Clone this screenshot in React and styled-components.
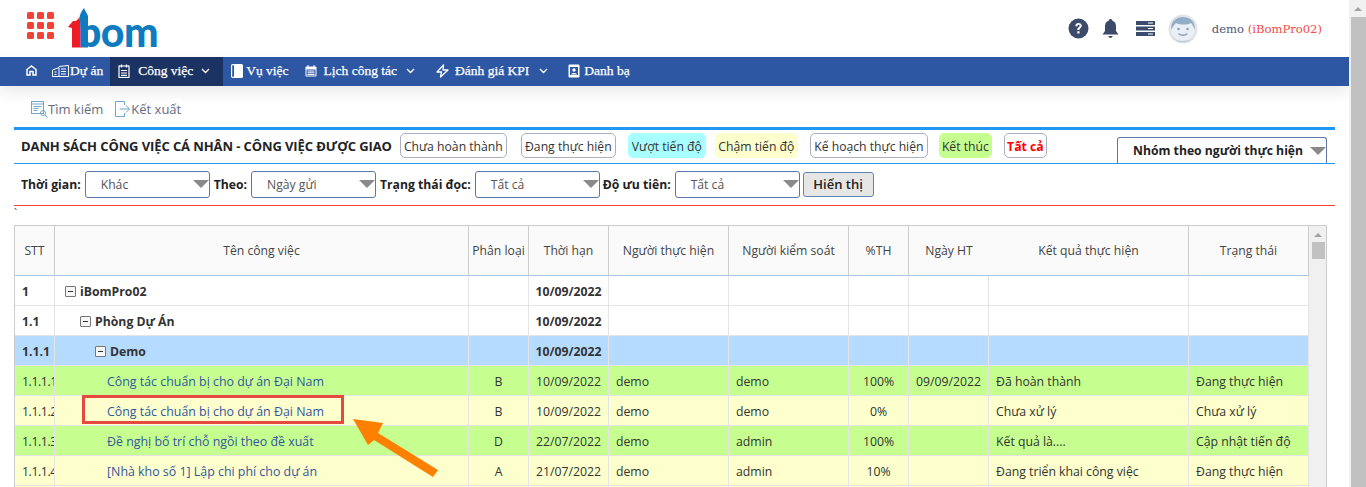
import React from "react";
import styled, { createGlobalStyle } from "styled-components";

const Global = createGlobalStyle`
  html, body { margin: 0; padding: 0; height: 487px; overflow: hidden; background: #fff; }
  * { box-sizing: border-box; }
  body { font-family: "Open Sans", "Noto Sans", sans-serif; font-size: 12px; color: #333; }
`;

const Page = styled.div`display: flex; width: 1366px; height: 487px; overflow: hidden;`;
const Main = styled.div`width: 1349px; height: 487px; overflow: hidden; flex: none;`;
const PageScroll = styled.div`
  width: 17px; height: 487px; flex: none; background: #f1f1f1; display: flex; flex-direction: column; align-items: flex-end;
`;
const ArrowCell = styled.div`
  width: 17px; height: 17px; display: flex; align-items: center; justify-content: center; flex: none;
`;
const UpTri = styled.div`
  width: 0; height: 0; border-left: 4px solid transparent; border-right: 4px solid transparent; border-bottom: 4px solid #a3a3a3;
`;
const PageThumb = styled.div`width: 15px; flex: 1; background: #c1c1c1;`;

const Header = styled.header`display: flex; align-items: center; justify-content: space-between; height: 57px; padding: 0 27px;`;
const Brand = styled.div`display: flex; align-items: flex-start; gap: 13px; height: 57px; padding-top: 8px;`;
const Actions = styled.div`display: flex; align-items: center; height: 57px;`;
const IconSlot = styled.span`display: flex; align-items: center; justify-content: center; margin-right: ${p => p.$mr}px;`;
const UserName = styled.span`font-family: "Roboto Slab", "DejaVu Serif", "Liberation Serif", serif; font-size: 11.6px; color: #4a5878; margin-left: 14px;`;
const Org = styled.span`color: #f44a45;`;

const Nav = styled.nav`
  height: 29px; background: #2d57a3; display: flex; align-items: stretch; padding-left: 26px;
  box-shadow: 0 6px 16px rgba(0,0,0,.09);
  font-family: "Liberation Serif", serif; color: #fff; font-size: 13.5px;
`;
const NavItem = styled.div`
  display: flex; align-items: center; white-space: nowrap; padding-bottom: 2px;
  margin-left: ${p => p.$ml || 0}px;
  width: ${p => p.$w ? p.$w + "px" : "auto"};
  padding-left: ${p => p.$pl || 0}px;
  background: ${p => p.$active ? "#1b3362" : "transparent"};
  -webkit-text-stroke: .25px #fff;
`;
const NavLabel = styled.span`margin-left: ${p => p.$ml}px;`;
const Chev = styled.span`display: flex; margin-left: ${p => p.$ml}px;`;

const Tools = styled.div`height: 41px; display: flex; align-items: center; padding: 5px 0 0 31px; color: #646c82; font-size: 13px; gap: 12px;`;
const Tool = styled.span`display: flex; align-items: center; gap: ${p => p.$g}px;`;

const Content = styled.div`position: relative; margin-left: 14px; width: 1321px;`;
const TitleRow = styled.div`
  height: 37px; border-top: 3px solid #2196f3; border-bottom: 1px solid #2196f3;
  display: flex; align-items: center; padding: 0 0 2px 7px; position: relative;
`;
const Title = styled.div`font-weight: 700; font-size: 13px; color: #222; white-space: nowrap; margin-right: 8px; letter-spacing: -.1px;`;
const Chip = styled.div`
  width: ${p => p.$w}px; height: 25px; margin-right: ${p => p.$mr}px; padding-top: 2px; border-radius: 5px; display: flex; align-items: center; justify-content: center; white-space: nowrap; flex: none;
  font-size: 12.2px; color: ${p => p.$red ? "#f00" : "#333"}; font-weight: ${p => p.$red ? 700 : 400};
  background: ${p => p.$bg || "#fff"}; border: 1px solid ${p => p.$bg ? p.$bg : "#aab0bf"};
`;
const GroupSelect = styled.div`
  position: absolute; right: 8px; top: 7px; width: 210px; height: 26px; border: 1px solid #5b77ab; border-bottom: 0; border-radius: 3px 3px 0 0;
  background: #fff; display: flex; align-items: center; padding-left: 15px; font-weight: 700; font-size: 12.2px; color: #222; white-space: nowrap;
`;
const Tri = styled.span`
  position: absolute; right: 0; top: 50%; margin-top: -4px; width: 0; height: 0;
  border-left: 8px solid transparent; border-right: 8px solid transparent; border-top: 8px solid #8a8a8a;
`;
const FilterRow = styled.div`
  height: 42px; border-bottom: 1px solid #f44336; display: flex; align-items: center; padding: 0 0 1px 7px;
`;
const FLabel = styled.label`font-weight: 700; font-size: 12.2px; color: #222; white-space: nowrap; margin-right: 4px;`;
const FSelect = styled.div`
  position: relative; width: 125px; height: 27px; border: 1px solid #5b77ab; border-radius: 3px; display: flex; align-items: center; padding-left: 15px;
  font-size: 12.2px; color: #555; margin-right: ${p => p.$mr ?? 4}px; flex: none;
`;
const ShowBtn = styled.button`
  width: 71px; height: 25px; background: #e6e6e6; border: 1px solid #5b86b3; border-radius: 3px; font: 600 13px "Open Sans", sans-serif; color: #222; padding: 0; flex: none;
`;
const Tick = styled.div`height: 19px; font-size: 11px; color: #444; padding-top: 2px; line-height: 10px;`;

const TableBox = styled.div`
  width: 1313px; height: 400px; border: 1px solid #ccc; border-bottom: 0; display: flex; overflow: hidden;
`;
const TableArea = styled.div`width: 1294px; flex: none; border-right: 1px solid #ccc;`;
const Table = styled.table`
  width: 1294px; table-layout: fixed; border-collapse: separate; border-spacing: 0;
`;
const Th = styled.th`
  height: 50px; background: #fafafa; font-weight: 400; color: #444; font-size: 12.2px; text-align: center; padding: 0;
  border-right: ${p => p.$nb ? "0" : "1px solid #ccc"}; border-bottom: 1px solid #a9c6de; white-space: nowrap; overflow: hidden;
`;
const Row = styled.tr`background: ${p => p.$bg};`;
const Td = styled.td`
  height: 30px; padding: 2px 0 0 ${p => p.$pl ?? 7}px; border-right: 1px solid #e4e4e4; border-bottom: 1px solid #e4e4e4;
  white-space: nowrap; overflow: hidden; color: ${p => p.$link ? "#34569f" : "#333"}; font-weight: ${p => p.$b ? 700 : 400};
  text-align: ${p => p.$c ? "center" : "left"}; font-size: ${p => p.$link ? 12.4 : 12.25}px;
  letter-spacing: ${p => p.$tight ? "-.4px" : "normal"};
`;
const Tree = styled.div`display: flex; align-items: center; gap: 4px;`;
const Toggle = styled.span`
  display: flex; width: 11px; height: 11px; border: 1px solid #777; border-radius: 1px; align-items: center; justify-content: center; background: #f6f6f6; flex: none;
  &::before { content: ""; width: 5px; height: 1px; background: #333; }
`;
const TScroll = styled.div`width: 18px; flex: none; background: #f0f0f0; display: flex; flex-direction: column; align-items: center;`;
const TTri = styled.div`margin-top: 7px; width: 0; height: 0; border-left: 4px solid transparent; border-right: 4px solid transparent; border-bottom: 4px solid #a3a3a3;`;
const TThumb = styled.div`margin-top: 5px; width: 13px; height: 17px; background: #c1c1c1;`;

const Callout = styled.div`position: absolute; left: 68px; top: 268px; width: 262px; height: 29px; border: 3px solid #e5493f; pointer-events: none;`;
const Arrow = styled.svg`position: absolute; left: 326px; top: 283px; pointer-events: none;`;

const Grid9 = () => (
  <svg width="27" height="27" viewBox="0 0 27 27" style={{ marginTop: 4 }}>
    {[0, 10, 20].flatMap(y => [0, 10, 20].map(x => <rect key={x + "-" + y} x={x} y={y} width="7" height="7" rx="1.5" fill="#f44336" />))}
  </svg>
);
const LogoWrap = styled.div`display: flex; align-items: flex-end; height: 40px;`;
const Sail = () => (
  <svg width="22" height="40" viewBox="0 0 22 40">
    <path d="M1 19 L6 13 L9 13 C11 11 12 10 12.5 9 C14 18 14 30 16 39.5 L5 39.5 L5 20 Z" fill="#ee1c25" />
    <path d="M17 0 C14 4 12.5 7 12.5 10 C14 18 14 30 16 39.5 L21 39.5 L21 8 C20 5 18 3 17 0 Z" fill="#0f7cc0" />
  </svg>
);
const LogoText = styled.span`
  font: 900 41px/32px "Lato", "Open Sans", sans-serif; color: #0f7cc0; letter-spacing: -.6px; margin-left: -11px; height: 32px; display: block;
`;

const Help = () => (
  <svg width="21" height="21" viewBox="0 0 21 21"><circle cx="10.5" cy="10.5" r="10" fill="#3c4a6b" />
    <path d="M7.3 8.2c0-2 1.4-3.2 3.3-3.2s3.2 1.1 3.2 2.8c0 2.3-2.4 2.3-2.4 4.2H9.3c0-2.8 2.4-2.8 2.4-4.2 0-.7-.5-1.1-1.1-1.1-.8 0-1.2.5-1.2 1.5z" fill="#fff" /><rect x="9.3" y="13.2" width="2.2" height="2.3" fill="#fff" /></svg>
);
const Bell = () => (
  <svg width="17" height="21" viewBox="0 0 17 21"><path d="M8.5 1c1 0 1.6.6 1.6 1.4C13 3.2 14 5.6 14 8.5V13l2.5 3.5H.5L3 13V8.5c0-2.9 1-5.3 3.9-6.1C6.9 1.6 7.5 1 8.5 1z" fill="#3c4a6b" /><path d="M6.3 18h4.4c-.4 1.3-1.2 2-2.2 2s-1.8-.7-2.2-2z" fill="#3c4a6b" /></svg>
);
const Server = () => (
  <svg width="19" height="15" viewBox="0 0 19 15">
    {[0, 5.5, 11].map(y => <g key={y}><rect y={y} width="19" height="4" fill="#3c4a6b" /><rect x="12" y={y + 1.5} width="5" height="1" fill="#fff" /></g>)}
  </svg>
);
const Avatar = () => (
  <svg width="30" height="30" viewBox="0 0 30 30">
    <circle cx="15" cy="15" r="14.5" fill="#dfe4e8" />
    <circle cx="15" cy="15" r="12" fill="#e9eff4" />
    <path d="M3.5 16C2 8 8 3 15 3s13 5 11.5 13c-1-3-2-5.5-3.5-7-3 2-11 2-15 0-1.5 1.5-3.5 4-4.5 7z" fill="#94adc6" />
    <circle cx="10.5" cy="15" r="1.3" fill="#8ba3ba" /><circle cx="19.5" cy="15" r="1.3" fill="#8ba3ba" />
    <path d="M10.5 19.5c2.5 2.3 6.5 2.3 9 0" stroke="#8ba3ba" strokeWidth="1.3" fill="none" />
    <path d="M4 23a14 14 0 0 0 22 0c-3 3-7 4-11 4s-8-1-11-4z" fill="#bcc7d0" />
  </svg>
);

const s = { fill: "none", stroke: "#fff", strokeWidth: 1.2 };
const Home = () => (<svg width="11" height="11" viewBox="0 0 11 11" {...s} strokeWidth="1.5"><path d="M1 4.5l4.5-3.5L10 4.5V10H7V6.5H4V10H1z" /></svg>);
const Bldg = () => (<svg width="17" height="12" viewBox="0 0 17 12" {...s} strokeWidth="1"><path d="M.5 11.5V5L7 2.5v9M7 1.5L16.5.5v11H.5" /><path d="M9 4h5M9 6.5h5M9 9h5M2.5 7h2M2.5 9.5h2" /></svg>);
const Clip = () => (<svg width="12" height="14" viewBox="0 0 12 14" {...s}><rect x="1" y="2" width="10" height="11.5" /><path d="M3.5 .5v3M8.5 .5v3M3 6.5h6M3 9h6M3 11.3h6" /></svg>);
const Book = () => (<svg width="12" height="14" viewBox="0 0 12 14"><rect x=".6" y=".6" width="10.8" height="12.8" rx="1" fill="none" stroke="#fff" strokeWidth="1.2" /><rect x="3" y="1" width="8" height="12" fill="#fff" /></svg>);
const Cal = () => (<svg width="12" height="12" viewBox="0 0 12 12"><rect x=".5" y="1.5" width="11" height="10" rx="1" fill="#fff" /><rect x="1.5" y="4.5" width="9" height="6" fill="#2d57a3" /><path d="M2.5 6h7M2.5 7.8h7M2.5 9.5h7" stroke="#fff" /><path d="M3 0v2M9 0v2" stroke="#fff" /></svg>);
const Bolt = () => (<svg width="13" height="14" viewBox="0 0 13 14" fill="none" stroke="#fff" strokeWidth="1.3" strokeLinejoin="round"><path d="M7.5 1L1 8h4.5l-1 5L12 6H7z" /></svg>);
const Contact = () => (<svg width="12" height="14" viewBox="0 0 12 14"><rect x=".5" y=".5" width="11" height="13" rx="1" fill="#fff" /><rect x="2" y="3" width="8" height="8" fill="#2d57a3" /><circle cx="6" cy="6" r="1.7" fill="#fff" /><path d="M3 10.5c.5-2 5.5-2 6 0z" fill="#fff" /></svg>);
const ChevD = () => (<svg width="9" height="6" viewBox="0 0 9 6" fill="none" stroke="#fff" strokeWidth="1.3"><path d="M1 1l3.5 3.5L8 1" /></svg>);
const SearchDoc = () => (
  <svg width="17" height="17" viewBox="0 0 17 17" fill="none" stroke="#6fa5cf">
    <rect x=".5" y=".5" width="12" height="12" /><path d="M.5 3h12M2.5 5.500h8M2.5 7.5h5M2.5 9.5h4" /><circle cx="12" cy="12" r="2.5" /><path d="M14 14l2.5 2.5" />
  </svg>
);
const Export = () => (
  <svg width="15" height="16" viewBox="0 0 15 16" fill="none" stroke="#6fa5cf"><path d="M9.5 4V.5H.5v15h9V12M4.5 8h10M11 4.5L14.5 8 11 11.5" /></svg>
);

const cols = [40, 414, 60, 80, 120, 120, 60, 80, 200, 120];
const heads = [
  ["STT"], ["Tên công việc"], ["Phân loại"], ["Thời hạn"], ["Người thực hiện"], ["Người kiểm soát"],
  ["%TH"], ["Ngày HT", true], ["Kết quả thực hiện"], ["Trạng thái"],
];
const GREEN = "#c6ff8f", YEL = "#fdffcc", BLUE = "#b5dcff";
const rows = [
  { bg: "#fff", stt: "1", name: "iBomPro02", lvl: 0, date: "10/09/2022" },
  { bg: "#fff", stt: "1.1", name: "Phòng Dự Án", lvl: 1, date: "10/09/2022" },
  { bg: BLUE, stt: "1.1.1", name: "Demo", lvl: 2, date: "10/09/2022" },
  { bg: GREEN, stt: "1.1.1.1", name: "Công tác chuẩn bị cho dự án Đại Nam", t: "B", date: "10/09/2022", a: "demo", b: "demo", p: "100%", d: "09/09/2022", r: "Đã hoàn thành", st: "Đang thực hiện" },
  { bg: YEL, stt: "1.1.1.2", name: "Công tác chuẩn bị cho dự án Đại Nam", t: "B", date: "10/09/2022", a: "demo", b: "demo", p: "0%", d: "", r: "Chưa xử lý", st: "Chưa xử lý" },
  { bg: GREEN, stt: "1.1.1.3", name: "Đề nghị bố trí chỗ ngồi theo đề xuất", t: "D", date: "22/07/2022", a: "demo", b: "admin", p: "100%", d: "", r: "Kết quả là....", st: "Cập nhật tiến độ" },
  { bg: YEL, stt: "1.1.1.4", name: "[Nhà kho số 1] Lập chi phí cho dự án", t: "A", date: "21/07/2022", a: "demo", b: "admin", p: "10%", d: "", r: "Đang triển khai công việc", st: "Đang thực hiện" },
  { bg: YEL, stt: "1.1.1.5", name: "", t: "", date: "", a: "", b: "", p: "", d: "", r: "", st: "" },
];

export default function App() {
  return (
    <Page>
      <Global />
      <Main>
        <Header>
          <Brand>
            <Grid9 />
            <LogoWrap>
              <Sail />
              <LogoText>bom</LogoText>
            </LogoWrap>
          </Brand>
          <Actions>
            <IconSlot $mr={13}><Help /></IconSlot>
            <IconSlot $mr={17}><Bell /></IconSlot>
            <IconSlot $mr={13}><Server /></IconSlot>
            <Avatar />
            <UserName>demo <Org>(iBomPro02)</Org></UserName>
          </Actions>
        </Header>
        <Nav>
          <NavItem><Home /></NavItem>
          <NavItem $ml={15}><Bldg /><NavLabel $ml={1}>Dự án</NavLabel></NavItem>
          <NavItem $ml={7} $w={113} $pl={8} $active><Clip /><NavLabel $ml={8}>Công việc</NavLabel><Chev $ml={8}><ChevD /></Chev></NavItem>
          <NavItem $ml={8}><Book /><NavLabel $ml={3}>Vụ việc</NavLabel></NavItem>
          <NavItem $ml={16}><Cal /><NavLabel $ml={7}>Lịch công tác</NavLabel><Chev $ml={9}><ChevD /></Chev></NavItem>
          <NavItem $ml={21}><Bolt /><NavLabel $ml={6}>Đánh giá KPI</NavLabel><Chev $ml={10}><ChevD /></Chev></NavItem>
          <NavItem $ml={20}><Contact /><NavLabel $ml={4}>Danh bạ</NavLabel></NavItem>
        </Nav>
        <Tools>
          <Tool $g={0}><SearchDoc />Tìm kiếm</Tool>
          <Tool $g={1}><Export />Kết xuất</Tool>
        </Tools>
        <Content>
          <TitleRow>
            <Title>DANH SÁCH CÔNG VIỆC CÁ NHÂN - CÔNG VIỆC ĐƯỢC GIAO</Title>
            <Chip $w={107} $mr={14}>Chưa hoàn thành</Chip>
            <Chip $w={95} $mr={12}>Đang thực hiện</Chip>
            <Chip $w={78} $mr={9} $bg="#a8ffff">Vượt tiến độ</Chip>
            <Chip $w={83} $mr={12} $bg="#fdffcc">Chậm tiến độ</Chip>
            <Chip $w={118} $mr={11}>Kế hoạch thực hiện</Chip>
            <Chip $w={53} $mr={12} $bg="#c6ff8f">Kết thúc</Chip>
            <Chip $w={43} $mr={0} $red>Tất cả</Chip>
            <GroupSelect>Nhóm theo người thực hiện<Tri /></GroupSelect>
          </TitleRow>
          <FilterRow>
            <FLabel>Thời gian:</FLabel><FSelect>Khác<Tri /></FSelect>
            <FLabel>Theo:</FLabel><FSelect>Ngày gửi<Tri /></FSelect>
            <FLabel>Trạng thái đọc:</FLabel><FSelect $mr={3}>Tất cả<Tri /></FSelect>
            <FLabel>Độ ưu tiên:</FLabel><FSelect $mr={3}>Tất cả<Tri /></FSelect>
            <ShowBtn>Hiển thị</ShowBtn>
          </FilterRow>
          <Tick>`</Tick>
          <TableBox>
            <TableArea>
              <Table>
                <colgroup>{cols.map((w, i) => <col key={i} style={{ width: w }} />)}</colgroup>
                <thead>
                  <tr>{heads.map(([h, nb]) => <Th key={h} $nb={nb}>{h}</Th>)}</tr>
                </thead>
                <tbody>
                  {rows.map(r => {
                    const group = r.lvl !== undefined;
                    return (
                      <Row key={r.stt} $bg={r.bg}>
                        <Td $b={group} $tight={!group} $pl={7}>{r.stt}</Td>
                        {group
                          ? <Td $b $pl={10 + r.lvl * 15}><Tree><Toggle />{r.name}</Tree></Td>
                          : <Td $link $pl={52}>{r.name}</Td>}
                        <Td $c $pl={0}>{r.t}</Td>
                        <Td $b={group} $c $pl={0}>{r.date}</Td>
                        <Td>{r.a}</Td>
                        <Td>{r.b}</Td>
                        <Td $c $pl={0}>{r.p}</Td>
                        <Td $c $pl={0}>{r.d}</Td>
                        <Td>{r.r}</Td>
                        <Td>{r.st}</Td>
                      </Row>
                    );
                  })}
                </tbody>
              </Table>
            </TableArea>
            <TScroll><TTri /><TThumb /></TScroll>
          </TableBox>
          <Callout />
          <Arrow width="110" height="80" viewBox="0 0 110 80">
            <path d="M13 9 L43 13 L38 23 L98 60 L93 67 L34 30 L28 35 Z" fill="#ff8000" />
          </Arrow>
        </Content>
      </Main>
      <PageScroll>
        <ArrowCell><UpTri /></ArrowCell>
        <PageThumb />
      </PageScroll>
    </Page>
  );
}
